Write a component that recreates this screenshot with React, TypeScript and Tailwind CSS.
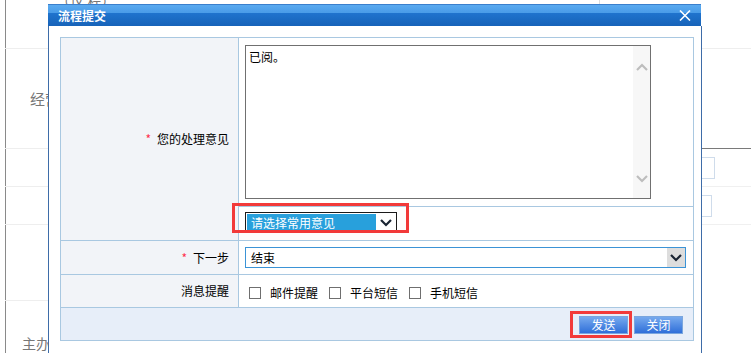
import React from 'react';

const font = { fontFamily: '"Noto Sans CJK SC", "Liberation Sans", sans-serif' };

const Chevron: React.FC<{ up?: boolean; className?: string }> = ({ up, className }) => (
  <svg width="12" height="8" viewBox="0 0 12 8" className={className}>
    <path
      d={up ? 'M1 7 L6 2 L11 7' : 'M1 1 L6 6 L11 1'}
      fill="none"
      stroke="currentColor"
      strokeWidth="2.2"
    />
  </svg>
);

const Checkbox: React.FC<{ label: string }> = ({ label }) => (
  <label className="flex items-center">
    <span className="w-[12px] h-[12px] border border-[#6f6f6f] bg-white" />
    <span className="ml-[9px]">{label}</span>
  </label>
);

const Required = () => <span className="text-[#ff2f4f] mr-[6px]">*</span>;

const BackgroundPage = () => (
  <div className="absolute inset-0 text-[#777]">
    <div className="absolute left-[5px] top-0 h-full border-l border-[#8a8a8a]" />
    <div className="absolute left-[5px] top-[48px] w-[43px] border-t border-[#eeeeee]" />
    <div className="absolute left-[5px] top-[148px] w-[43px] border-t border-[#eeeeee]" />
    <div className="absolute left-[5px] top-[186px] w-[43px] border-t border-[#eeeeee]" />
    <div className="absolute left-[5px] top-[224px] w-[43px] border-t border-[#eeeeee]" />
    <div className="absolute left-[5px] top-[300px] w-[43px] border-t border-[#eeeeee]" />
    <div className="absolute left-[56px] top-[-10px] text-[14px]">（议 程）</div>
    <div className="absolute left-[30px] top-[88px] text-[15px]">经营</div>
    <div className="absolute left-[22px] top-[333px] text-[14px]">主办</div>
    <div className="absolute left-[599px] top-0 h-[5px] border-l border-[#dddddd]" />
    <div className="absolute left-[701px] top-[48px] w-[50px] border-t border-[#eeeeee]" />
    <div className="absolute left-[701px] top-[148px] w-[50px] border-t border-[#7a7a7a]" />
    <div className="absolute left-[701px] top-[186px] w-[50px] border-t border-[#f0f0f0]" />
    <div className="absolute left-[701px] top-[224px] w-[50px] border-t border-[#f0f0f0]" />
    <div className="absolute left-[700px] top-[157px] w-[15px] h-[22px] border border-[#cfdceb]" />
    <div className="absolute left-[700px] top-[195px] w-[12px] h-[22px] border border-[#cfdceb]" />
  </div>
);

const App: React.FC = () => {
  return (
    <div className="relative w-[751px] h-[353px] overflow-hidden bg-white text-[12px] text-black" style={font}>
      <BackgroundPage />

      <div className="absolute left-[48px] top-[4px] w-[654px] flex flex-col">
        <div className="h-[22px] mr-[1px] flex items-center justify-between pl-[10px] pr-[10px] bg-[linear-gradient(to_bottom,#5aaaf0_0%,#4a9ce8_36%,#1f73cd_40%,#1763b9_100%)] border-t border-[#3b7fcc]">
          <span className="text-white font-bold text-[12px] leading-none">流程提交</span>
          <svg width="12" height="11" viewBox="0 0 12 11">
            <path d="M1 0.5 L11 10.5 M11 0.5 L1 10.5" stroke="white" strokeWidth="1.6" />
          </svg>
        </div>

        <div className="h-[340px] bg-white border-l border-r border-[#3e6ca8] pl-[11px] pt-[11px]">
          <div className="relative w-[634px] grid grid-cols-[177px_454px] grid-rows-[168px_33px_33px_32px_32px] gap-px p-px bg-[#a9c8e1]">
            <div className="row-span-2 bg-[#f2f4f8] flex items-center justify-end pr-[9px]">
              <Required />
              您的处理意见
            </div>

            <div className="bg-white pl-[6px] pt-[7px]">
              <div className="w-[406px] h-[154px] border border-[#707070] flex">
                <div className="flex-1 pl-[3px] pt-[2px]">已阅。</div>
                <div className="w-[17px] bg-[#f7f7f7] flex flex-col items-center justify-between pt-[17px] pb-[15px] text-[#bdbdbd]">
                  <Chevron up />
                  <Chevron />
                </div>
              </div>
            </div>

            <div className="bg-white pl-[6px] pt-[5px]">
              <div className="w-[152px] h-[21px] border border-[#1a1a1a] bg-white flex items-stretch p-px">
                <div className="w-[129px] bg-[#28a0dc] text-white pl-[4px] leading-[17px]">请选择常用意见</div>
                <div className="flex-1 flex items-center justify-center text-[#1a2433]">
                  <Chevron />
                </div>
              </div>
            </div>

            <div className="bg-[#f2f4f8] flex items-center justify-end pr-[9px]">
              <Required />
              下一步
            </div>
            <div className="bg-white pl-[6px] pt-[6px]">
              <div className="w-[441px] h-[21px] border border-[#3b93d6] flex">
                <div className="flex-1 pl-[5px] leading-[19px]">结束</div>
                <div className="w-[18px] bg-[#dddddd] flex items-center justify-center text-[#1a2433]">
                  <Chevron />
                </div>
              </div>
            </div>

            <div className="bg-[#f2f4f8] flex items-center justify-end pr-[9px]">消息提醒</div>
            <div className="bg-white flex items-center gap-[11px] pl-[10px] pt-[4px]">
              <Checkbox label="邮件提醒" />
              <Checkbox label="平台短信" />
              <Checkbox label="手机短信" />
            </div>

            <div className="col-span-2 bg-[#e7eef9] flex items-start justify-end gap-[6px] pr-[10px] pt-[8px]">
              <button className="w-[49px] h-[18px] border border-[#7aa6de] bg-[linear-gradient(to_bottom,#76a9ee,#2f6fd9)] text-white leading-none">
                发送
              </button>
              <button className="w-[49px] h-[18px] border border-[#7aa6de] bg-[linear-gradient(to_bottom,#76a9ee,#2f6fd9)] text-white leading-none">
                关闭
              </button>
            </div>

            <div className="absolute left-[172px] top-[166px] w-[177px] h-[30px] border-[3px] border-[#f23a3a]" />
            <div className="absolute left-[510px] top-[274px] w-[62px] h-[27px] border-[3px] border-[#f23a3a]" />
          </div>
        </div>
      </div>
    </div>
  );
};

export default App;
